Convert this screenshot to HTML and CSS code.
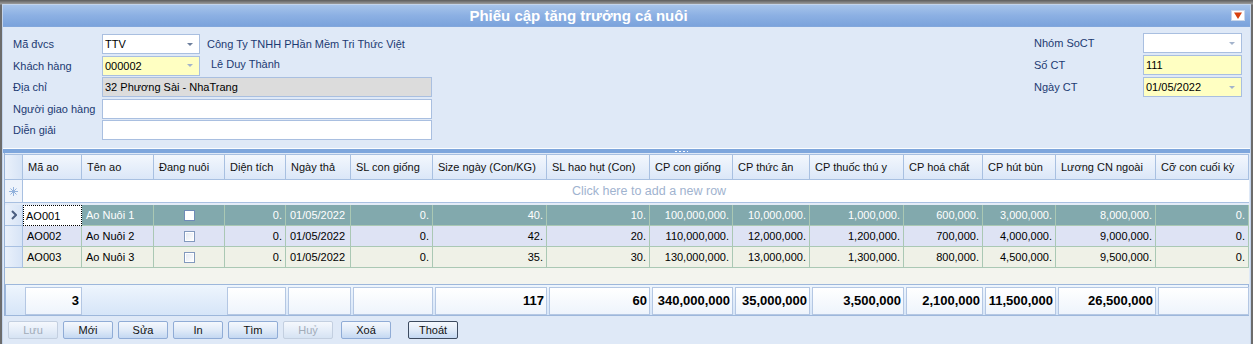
FILE: index.html
```html
<!DOCTYPE html>
<html>
<head>
    <meta charset="utf-8">
    <link rel="stylesheet" href="styles.css">
</head>
<body>
<div class="window">
    <div class="titlebar">
        <span class="title">Phiếu cập tăng trưởng cá nuôi</span>
        <span class="pin"><svg width="14" height="11" viewBox="0 0 14 11"><rect x="0.5" y="0.5" width="13" height="10" fill="#fff" stroke="#c9d6ea"/><polygon points="3,2.5 11,2.5 7,9" fill="#d8410e"/></svg></span>
    </div>

    <div class="form">
        <div class="form-left">
            <span class="lbl">Mã đvcs</span>
            <div class="field combo"><span>TTV</span><i class="arrow"></i></div>
            <span class="info">Công Ty TNHH PHần Mềm Tri Thức Việt</span>

            <span class="lbl">Khách hàng</span>
            <div class="field combo yellow"><span>000002</span><i class="arrow light"></i></div>
            <span class="info shift">Lê Duy Thành</span>

            <span class="lbl">Địa chỉ</span>
            <div class="field wide grey"><span>32 Phương Sài - NhaTrang</span></div>

            <span class="lbl">Người giao hàng</span>
            <div class="field wide"></div>

            <span class="lbl">Diễn giải</span>
            <div class="field wide"></div>
        </div>

        <div class="form-right">
            <span class="lbl">Nhóm SoCT</span>
            <div class="field combo"><span></span><i class="arrow light"></i></div>

            <span class="lbl">Số CT</span>
            <div class="field yellow"><span>111</span></div>

            <span class="lbl">Ngày CT</span>
            <div class="field combo yellow"><span>01/05/2022</span><i class="arrow light"></i></div>
        </div>
    </div>

    <div class="splitter"><span class="grip"></span></div>

    <div class="grid">
        <div class="row head">
            <div class="cell ind"></div>
            <div class="cell">Mã ao</div>
            <div class="cell">Tên ao</div>
            <div class="cell">Đang nuôi</div>
            <div class="cell">Diện tích</div>
            <div class="cell">Ngày thả</div>
            <div class="cell">SL con giống</div>
            <div class="cell">Size ngày (Con/KG)</div>
            <div class="cell">SL hao hụt (Con)</div>
            <div class="cell">CP con giống</div>
            <div class="cell">CP thức ăn</div>
            <div class="cell">CP thuốc thú y</div>
            <div class="cell">CP hoá chất</div>
            <div class="cell">CP hút bùn</div>
            <div class="cell">Lương CN ngoài</div>
            <div class="cell">Cỡ con cuối kỳ</div>
        </div>

        <div class="row newrow">
            <div class="cell ind"><svg width="9" height="9" viewBox="0 0 9 9"><g stroke="#93b2dc" stroke-width="1"><line x1="4.5" y1="0" x2="4.5" y2="9"/><line x1="0" y1="4.5" x2="9" y2="4.5"/><line x1="1.5" y1="1.5" x2="7.5" y2="7.5"/><line x1="7.5" y1="1.5" x2="1.5" y2="7.5"/></g></svg></div>
            <div class="hint">Click here to add a new row</div>
        </div>
        <div class="gap"></div>

        <div class="row data selected">
            <div class="cell ind"><svg width="6" height="10" viewBox="0 0 6 10"><polyline points="1,1 5,5 1,9" fill="none" stroke="#4b5e80" stroke-width="2"/></svg></div>
            <div class="cell focus">AO001</div>
            <div class="cell">Ao Nuôi 1</div>
            <div class="cell mid"><span class="chk on"></span></div>
            <div class="cell num">0.</div>
            <div class="cell">01/05/2022</div>
            <div class="cell num">0.</div>
            <div class="cell num">40.</div>
            <div class="cell num">10.</div>
            <div class="cell num">100,000,000.</div>
            <div class="cell num">10,000,000.</div>
            <div class="cell num">1,000,000.</div>
            <div class="cell num">600,000.</div>
            <div class="cell num">3,000,000.</div>
            <div class="cell num">8,000,000.</div>
            <div class="cell num">0.</div>
        </div>
        <div class="row data even">
            <div class="cell ind"></div>
            <div class="cell">AO002</div>
            <div class="cell">Ao Nuôi 2</div>
            <div class="cell mid"><span class="chk"></span></div>
            <div class="cell num">0.</div>
            <div class="cell">01/05/2022</div>
            <div class="cell num">0.</div>
            <div class="cell num">42.</div>
            <div class="cell num">20.</div>
            <div class="cell num">110,000,000.</div>
            <div class="cell num">12,000,000.</div>
            <div class="cell num">1,200,000.</div>
            <div class="cell num">700,000.</div>
            <div class="cell num">4,000,000.</div>
            <div class="cell num">9,000,000.</div>
            <div class="cell num">0.</div>
        </div>
        <div class="row data odd">
            <div class="cell ind"></div>
            <div class="cell">AO003</div>
            <div class="cell">Ao Nuôi 3</div>
            <div class="cell mid"><span class="chk"></span></div>
            <div class="cell num">0.</div>
            <div class="cell">01/05/2022</div>
            <div class="cell num">0.</div>
            <div class="cell num">35.</div>
            <div class="cell num">30.</div>
            <div class="cell num">130,000,000.</div>
            <div class="cell num">13,000,000.</div>
            <div class="cell num">1,300,000.</div>
            <div class="cell num">800,000.</div>
            <div class="cell num">4,500,000.</div>
            <div class="cell num">9,500,000.</div>
            <div class="cell num">0.</div>
        </div>

        <div class="blank"></div>

        <div class="row summary">
            <div class="sum-cell"></div>
            <div class="sum-cell"><b>3</b></div>
            <div class="sum-cell"></div>
            <div class="sum-cell"></div>
            <div class="sum-cell"><b></b></div>
            <div class="sum-cell"><b></b></div>
            <div class="sum-cell"><b></b></div>
            <div class="sum-cell"><b>117</b></div>
            <div class="sum-cell"><b>60</b></div>
            <div class="sum-cell"><b>340,000,000</b></div>
            <div class="sum-cell"><b>35,000,000</b></div>
            <div class="sum-cell"><b>3,500,000</b></div>
            <div class="sum-cell"><b>2,100,000</b></div>
            <div class="sum-cell"><b>11,500,000</b></div>
            <div class="sum-cell"><b>26,500,000</b></div>
            <div class="sum-cell"><b></b></div>
        </div>
    </div>

    <div class="actions">
        <button class="btn" disabled>Lưu</button>
        <button class="btn">Mới</button>
        <button class="btn">Sửa</button>
        <button class="btn">In</button>
        <button class="btn">Tìm</button>
        <button class="btn" disabled>Huỷ</button>
        <button class="btn push">Xoá</button>
        <button class="btn default">Thoát</button>
    </div>
</div>
</body>
</html>
```

FILE: styles.css
```css
body {
    margin: 0;
    background: linear-gradient(#5c5c5c, #9c9c9c 4px, #6c6c6c 5px);
    font-family: "Liberation Sans", Arial, sans-serif;
    font-size: 11px;
    color: #000;
    overflow: hidden;
}
.window {
    margin: 4px 2px 0 2px;
    height: 340px;
    background-color: #dfe9f7;
    border: 1px solid #c3d4ec;
    border-bottom: none;
    box-sizing: border-box;
}

/* title */
.titlebar {
    display: flex;
    align-items: center;
    height: 22px;
    background: linear-gradient(#a7c4eb, #8cb0e3 50%, #7ba3dc);
    border-bottom: 1px solid #82a7dc;
    box-sizing: border-box;
}
.title {
    flex: 1;
    text-align: center;
    padding-right: 77px;
    color: #fff;
    font-size: 15px;
    font-weight: bold;
}
.pin {
    display: flex;
    margin-right: 5px;
}

/* header form */
.form {
    display: flex;
    justify-content: space-between;
    height: 121px;
    padding: 7px 8px 0 10px;
    box-sizing: border-box;
}
.form-left {
    display: grid;
    grid-template-columns: 89px 98px 232px;
    grid-auto-rows: 20px;
    row-gap: 1.5px;
    align-content: start;
}
.form-right {
    display: grid;
    grid-template-columns: 109px 99px;
    grid-auto-rows: 20px;
    row-gap: 2px;
    align-content: start;
    margin-top: -1px;
}
.lbl {
    display: flex;
    align-items: center;
    color: #1c3a72;
}
.info {
    display: flex;
    align-items: center;
    padding-left: 7px;
    color: #1c3a72;
}
.info.shift {
    padding-left: 11px;
    margin-top: -4px;
}
.field {
    display: flex;
    align-items: center;
    justify-content: space-between;
    padding: 0 6px 0 2px;
    background-color: #fff;
    border: 1px solid #a9bfe0;
    box-sizing: border-box;
    height: 20px;
}
.field.wide {
    grid-column: 2 / 4;
    width: 330px;
}
.yellow {
    background-color: #ffffc2;
}
.grey {
    background-color: #dcdcdc;
}
.arrow {
    width: 0;
    height: 0;
    border-left: 3px solid transparent;
    border-right: 3px solid transparent;
    border-top: 3px solid #6d7f9c;
}
.arrow.light {
    border-top-color: #a3b3cc;
}

/* splitter */
.splitter {
    display: flex;
    justify-content: center;
    align-items: center;
    height: 5px;
    background-color: #7ea6dc;
    border-top: 1px solid #fbfdff;
    box-sizing: border-box;
}
.grip {
    width: 13px;
    height: 1px;
    margin-left: 110px;
    background: repeating-linear-gradient(90deg, #fff 0 2px, transparent 2px 4px);
}

/* grid */
.grid {
    --cols: 18px 59px 72px 71px 61px 65px 82px 114px 103px 83px 77px 94px 79px 73px 100px 93px;
    margin: 0 1px;
    padding-top: 1px;
    border-left: 1px solid #98b2d6;
}
.row {
    display: grid;
    grid-template-columns: var(--cols);
}
.cell {
    display: flex;
    align-items: center;
    padding: 0 4px;
    white-space: nowrap;
    overflow: hidden;
    box-sizing: border-box;
}
.head {
    height: 24px;
    background: linear-gradient(#f3f7fd, #dbe7f8);
    border-top: 1px solid #a8c0e1;
    border-bottom: 1px solid #a8c0e1;
}
.head .cell {
    padding-left: 5px;
    border-right: 1px solid #a8c0e1;
    color: #111;
}
.cell.ind {
    justify-content: center;
    padding: 0;
    background: linear-gradient(90deg, #eaf1fb, #d7e4f6);
    border-right: 1px solid #a8c0e1;
}
.newrow {
    height: 22px;
    background-color: #fff;
    border-bottom: 1px solid #a8c0e1;
}
.newrow .cell.ind {
    background: #eef3fb;
}
.hint {
    grid-column: 2 / -1;
    display: flex;
    align-items: center;
    justify-content: center;
    color: #9fb3cf;
    font-size: 12.5px;
    padding-left: 26px;
}
.gap {
    height: 2px;
    background-color: #e3ebf7;
}
.data {
    height: 21px;
}
.data .cell {
    border-right: 1px solid #aac8b4;
    border-bottom: 1px solid #aac8b4;
}
.data .cell.ind {
    border-color: #a8c0e1;
}
.data .cell.num {
    justify-content: flex-end;
    padding-right: 3px;
}
.data .cell.mid {
    justify-content: center;
}
.selected {
    background-color: #82a9ad;
    color: #fff;
}
.selected .cell.focus {
    background-color: #fff;
    color: #000;
    border: 1px dotted #000;
    padding-left: 2px;
}
.even {
    background-color: #dee3f4;
}
.odd {
    background-color: #eff1e7;
}
.chk {
    width: 11px;
    height: 11px;
    background: linear-gradient(135deg, #e2e8f1, #fff);
    border: 1px solid #8299bd;
    box-shadow: inset 0 0 0 1px #fff;
    box-sizing: border-box;
}
.chk.on {
    background: #fff;
    border-color: #6f8bb7;
}
.blank {
    height: 16px;
    background-color: #f3f4ee;
}
.summary {
    height: 32px;
    background: linear-gradient(#eef5fd, #d6e5f8);
    border: 1px solid #9db7db;
    box-sizing: border-box;
}
.sum-cell {
    padding: 2px 1px 2px 1px;
}
.sum-cell b {
    display: block;
    height: 100%;
    padding-right: 2px;
    text-align: right;
    line-height: 26px;
    font-size: 13px;
    background: linear-gradient(#fff, #eef4fc);
    border: 1px solid #b4c7e3;
    box-sizing: border-box;
}

/* buttons */
.actions {
    display: flex;
    gap: 5px;
    padding: 5px 0 0 5px;
}
.btn {
    width: 50px;
    height: 18px;
    padding: 0;
    font-family: "Liberation Sans", Arial, sans-serif;
    font-size: 11px;
    color: #111;
    background: linear-gradient(#f5f8fd, #e1ebf8 50%, #c4d8f2);
    border: 1px solid #90acd6;
    border-radius: 2px;
}
.btn:disabled {
    color: #a2acb9;
    border-color: #c3cfe0;
    background: linear-gradient(#f5f8fd, #e6eef9 50%, #d6e3f3);
}
.btn.push {
    margin-left: 3px;
}
.btn.default {
    margin-left: 12px;
    border-color: #3d4b60;
}
```
